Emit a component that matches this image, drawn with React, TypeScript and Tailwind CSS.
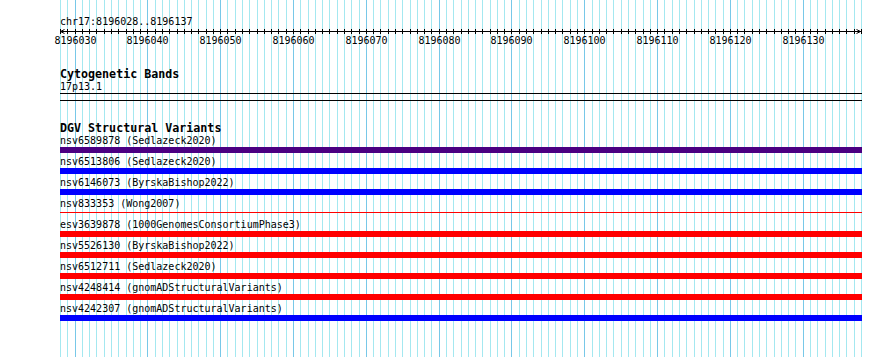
import React from "react";

const START = 8196028;
const BASES = 110;
// x position of each base guideline, 60..861
const xs = Array.from({ length: BASES + 1 }, (_, i) => Math.round(60 + (i * 801) / BASES));

const variants = [
  { label: "nsv6589878 (Sedlazeck2020)", color: "bg-[#4b0082]", thin: false },
  { label: "nsv6513806 (Sedlazeck2020)", color: "bg-[#0000ff]", thin: false },
  { label: "nsv6146073 (ByrskaBishop2022)", color: "bg-[#0000ff]", thin: false },
  { label: "nsv833353 (Wong2007)", color: "bg-[#ff0000]", thin: true },
  { label: "esv3639878 (1000GenomesConsortiumPhase3)", color: "bg-[#ff0000]", thin: false },
  { label: "nsv5526130 (ByrskaBishop2022)", color: "bg-[#ff0000]", thin: false },
  { label: "nsv6512711 (Sedlazeck2020)", color: "bg-[#ff0000]", thin: false },
  { label: "nsv4248414 (gnomADStructuralVariants)", color: "bg-[#ff0000]", thin: false },
  { label: "nsv4242307 (gnomADStructuralVariants)", color: "bg-[#0000ff]", thin: false },
];

function GuideLines() {
  return (
    <svg className="absolute inset-0" width={890} height={357} shapeRendering="crispEdges">
      {xs.map((x, i) => (
        <rect
          key={i}
          x={x}
          y={0}
          width={1}
          height={357}
          fill={(START + i) % 10 === 0 ? "#78c8e8" : "#a4e8f0"}
        />
      ))}
    </svg>
  );
}

function Ruler() {
  return (
    <svg className="block" width={890} height={20} shapeRendering="crispEdges">
      <rect x={60} y={3} width={802} height={1} fill="#000" />
      {xs.map((x, i) => (
        <rect key={i} x={x} y={1} width={1} height={5} fill="#000" />
      ))}
      <path d="M64.5 1.5 L60.5 3.5 L64.5 5.5" fill="none" stroke="#000" strokeWidth={1} shapeRendering="auto" />
      <path d="M856.5 1.5 L860.5 3.5 L856.5 5.5" fill="none" stroke="#000" strokeWidth={1} shapeRendering="auto" />
      {xs.map((x, i) =>
        (START + i) % 10 === 0 ? (
          <text
            key={"t" + i}
            x={x + 0.5}
            y={15.5}
            textAnchor="middle"
            fontFamily="'DejaVu Sans Mono', monospace"
            fontSize={10}
            fill="#000"
          >
            {START + i}
          </text>
        ) : null
      )}
    </svg>
  );
}

export default function App() {
  return (
    <div className="relative h-[357px] w-[890px] overflow-hidden bg-white font-['DejaVu_Sans_Mono',monospace] text-black">
      <GuideLines />
      <div className="relative pt-[17px]">
        <div className="pl-[60px] text-[10px] leading-[10px] h-[11px]">chr17:8196028..8196137</div>
        <Ruler />

        <div className="pl-[60px] mt-[21px]">
          <div className="text-[11.67px] leading-[10px] h-[12px] font-bold">Cytogenetic Bands</div>
          <div className="mt-px text-[10px] leading-[10px] h-[11px]">17p13.1</div>
          <div className="w-[802px] h-[8px] border-y border-black" />
        </div>

        <div className="pl-[60px] mt-[22px]">
          <div className="text-[11.67px] leading-[10px] h-[12px] font-bold">DGV Structural Variants</div>
          <div className="mt-px flex flex-col">
            {variants.map((v) => (
              <div key={v.label} className="h-[21px]">
                <div className="text-[10px] leading-[10px] h-[11px] whitespace-pre">{v.label}</div>
                <div className="h-[6px] w-[802px] flex flex-col">
                  {v.thin ? (
                    <div className={`mt-[2px] h-px w-full ${v.color}`} />
                  ) : (
                    <div className={`h-[6px] w-full ${v.color}`} />
                  )}
                </div>
              </div>
            ))}
          </div>
        </div>
      </div>
    </div>
  );
}
